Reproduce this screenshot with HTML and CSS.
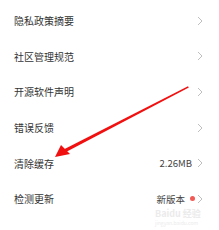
FILE: index.html
```html
<!DOCTYPE html>
<html lang="zh-CN">
<head>
<meta charset="utf-8">
<link rel="stylesheet" href="styles.css">
</head>
<body>
<div class="page">
  <ul class="list">
    <li class="row"><span class="label">隐私政策摘要</span><span class="right"><svg class="chev" viewBox="0 0 6 10"><path d="M1 1 L5 5 L1 9"/></svg></span></li>
    <li class="row"><span class="label">社区管理规范</span><span class="right"><svg class="chev" viewBox="0 0 6 10"><path d="M1 1 L5 5 L1 9"/></svg></span></li>
    <li class="row"><span class="label">开源软件声明</span><span class="right"><svg class="chev" viewBox="0 0 6 10"><path d="M1 1 L5 5 L1 9"/></svg></span></li>
    <li class="row"><span class="label">错误反馈</span><span class="right"><svg class="chev" viewBox="0 0 6 10"><path d="M1 1 L5 5 L1 9"/></svg></span></li>
    <li class="row"><span class="label">清除缓存</span><span class="right"><span class="value">2.26MB</span><svg class="chev" viewBox="0 0 6 10"><path d="M1 1 L5 5 L1 9"/></svg></span></li>
    <li class="row"><span class="label">检测更新</span><span class="right"><span class="value">新版本</span><span class="dot"></span><svg class="chev" viewBox="0 0 6 10"><path d="M1 1 L5 5 L1 9"/></svg></span></li>
  </ul>
  <svg class="arrow" viewBox="0 0 219 230" width="219" height="230">
    <polygon points="188,86.2 188.8,87.6 66,152 64.6,149" fill="#f01010"/>
    <polygon points="55,157 61,145 70,154" fill="#f01010"/>
  </svg>
  <div class="watermark"><span class="wm1">Bai<span class="paw">du</span> 经验</span><span class="wm2">jingyan.baidu.com</span></div>
</div>
</body>
</html>
```
FILE: styles.css
```css
html, body {
  margin: 0;
  padding: 0;
  background: #ffffff;
}
.page {
  position: relative;
  width: 219px;
  height: 230px;
  overflow: hidden;
  font-family: "Noto Sans CJK SC", "Noto Sans", sans-serif;
}
.list {
  list-style: none;
  margin: 0;
  padding: 3px 0 0 0;
}
.row {
  height: 35.6px;
  display: flex;
  align-items: center;
  justify-content: space-between;
  padding: 0 16px 0 14px;
}
.label {
  font-size: 10px;
  color: #333333;
  letter-spacing: 0;
}
.right {
  display: flex;
  align-items: center;
}
.value {
  font-size: 9.5px;
  color: #444444;
  margin-right: 5px;
}
.dot {
  width: 5px;
  height: 5px;
  border-radius: 50%;
  background: #f25a55;
  margin-right: 2px;
}
.chev {
  width: 6px;
  height: 10px;
  fill: none;
  stroke: #b8b8b8;
  stroke-width: 0.9;
}
.arrow {
  position: absolute;
  left: 0;
  top: 0;
}
.watermark {
  position: absolute;
  left: 155px;
  top: 209px;
  display: flex;
  flex-direction: column;
  color: #ebebeb;
  line-height: 1;
}
.wm1 {
  font-size: 9px;
  font-weight: bold;
}
.wm2 {
  font-size: 5px;
  margin-top: 2px;
}
```
